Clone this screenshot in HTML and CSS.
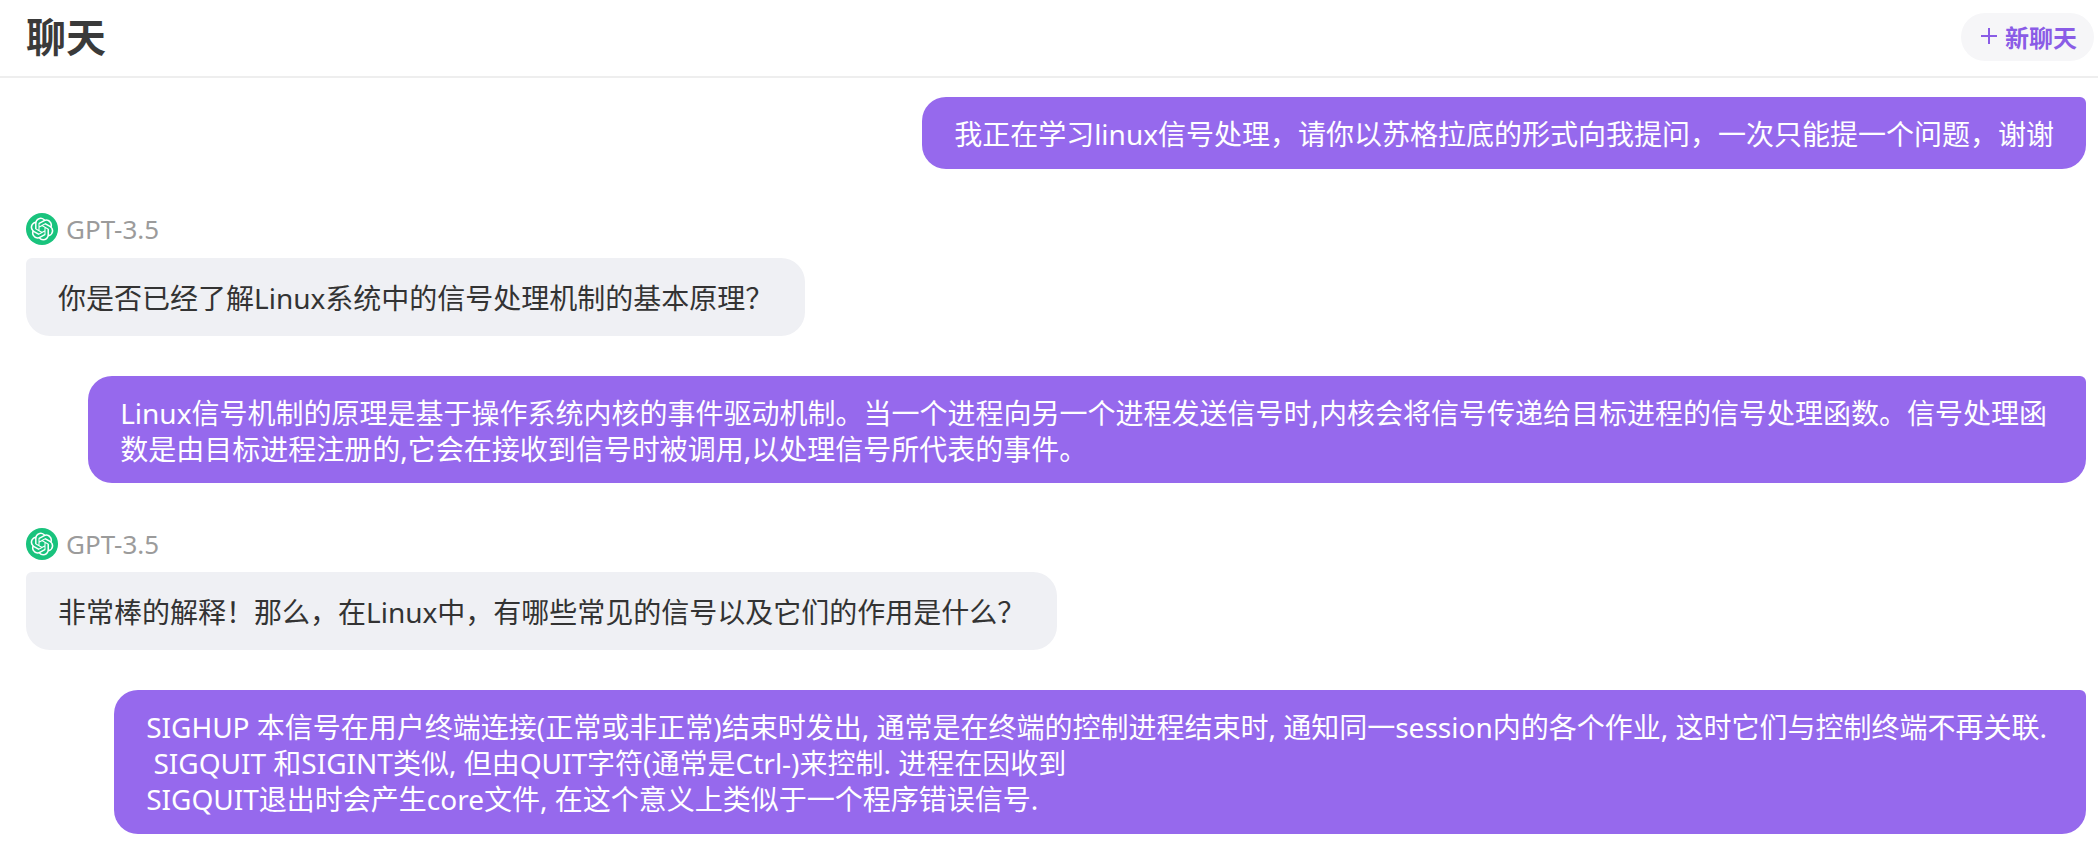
FILE: index.html
```html
<!DOCTYPE html>
<html lang="zh-CN">

<head>
    <meta charset="UTF-8">
    <meta name="viewport" content="width=device-width, initial-scale=1.0">
    <title>聊天</title>
    <link rel="stylesheet" href="styles.css">
</head>

<body>

    <header class="topbar">
        <h1 class="title">聊天</h1>
        <button class="new-chat">
            <svg class="plus" viewBox="0 0 18 18" width="18" height="18">
                <path d="M9 1v16M1 9h16" stroke="currentColor" stroke-width="2" fill="none" />
            </svg>
            <span>新聊天</span>
        </button>
    </header>

    <main class="chat">
        <div class="bubble user">我正在学习linux信号处理，请你以苏格拉底的形式向我提问，一次只能提一个问题，谢谢</div>

        <div class="reply">
            <div class="model">
                <svg class="avatar" viewBox="0 0 32 32" width="32" height="32">
                    <circle cx="16" cy="16" r="16" fill="#19c37d" />
                    <path transform="translate(4.6 4.6) scale(.95)" fill="#fff" d="M22.2819 9.8211a5.9847 5.9847 0 0 0-.5157-4.9108 6.0462 6.0462 0 0 0-6.5098-2.9A6.0651 6.0651 0 0 0 4.9807 4.1818a5.9847 5.9847 0 0 0-3.9977 2.9 6.0462 6.0462 0 0 0 .7427 7.0966 5.98 5.98 0 0 0 .511 4.9107 6.051 6.051 0 0 0 6.5146 2.9001A5.9847 5.9847 0 0 0 13.2599 24a6.0557 6.0557 0 0 0 5.7718-4.2058 5.9894 5.9894 0 0 0 3.9977-2.9001 6.0557 6.0557 0 0 0-.7475-7.0729zm-9.022 12.6081a4.4755 4.4755 0 0 1-2.8764-1.0408l.1419-.0804 4.7783-2.7582a.7948.7948 0 0 0 .3927-.6813v-6.7369l2.02 1.1686a.071.071 0 0 1 .038.052v5.5826a4.504 4.504 0 0 1-4.4945 4.4944zm-9.6607-4.1254a4.4708 4.4708 0 0 1-.5346-3.0137l.142.0852 4.783 2.7582a.7712.7712 0 0 0 .7806 0l5.8428-3.3685v2.3324a.0804.0804 0 0 1-.0332.0615L9.74 19.9502a4.4992 4.4992 0 0 1-6.1408-1.6464zM2.3408 7.8956a4.485 4.485 0 0 1 2.3655-1.9728V11.6a.7664.7664 0 0 0 .3879.6765l5.8144 3.3543-2.0201 1.1685a.0757.0757 0 0 1-.071 0l-4.8303-2.7865A4.504 4.504 0 0 1 2.3408 7.872zm16.5963 3.8558L13.1038 8.364 15.1192 7.2a.0757.0757 0 0 1 .071 0l4.8303 2.7913a4.4944 4.4944 0 0 1-.6765 8.1042v-5.6772a.79.79 0 0 0-.407-.667zm2.0107-3.0231l-.142-.0852-4.7735-2.7818a.7759.7759 0 0 0-.7854 0L9.409 9.2297V6.8974a.0662.0662 0 0 1 .0284-.0615l4.8303-2.7866a4.4992 4.4992 0 0 1 6.6802 4.66zM8.3065 12.863l-2.02-1.1638a.0804.0804 0 0 1-.038-.0567V6.0742a4.4992 4.4992 0 0 1 7.3757-3.4537l-.142.0805L8.704 5.459a.7948.7948 0 0 0-.3927.6813zm1.0976-2.3654l2.602-1.4998 2.6069 1.4998v2.9994l-2.5974 1.4997-2.6067-1.4997Z" />
                </svg>
                <span class="model-name">GPT-3.5</span>
            </div>
            <div class="bubble bot">你是否已经了解Linux系统中的信号处理机制的基本原理？</div>
        </div>

        <div class="bubble user long">Linux信号机制的原理是基于操作系统内核的事件驱动机制。当一个进程向另一个进程发送信号时,内核会将信号传递给目标进程的信号处理函数。信号处理函<br>数是由目标进程注册的,它会在接收到信号时被调用,以处理信号所代表的事件。</div>

        <div class="reply">
            <div class="model">
                <svg class="avatar" viewBox="0 0 32 32" width="32" height="32">
                    <circle cx="16" cy="16" r="16" fill="#19c37d" />
                    <path transform="translate(4.6 4.6) scale(.95)" fill="#fff" d="M22.2819 9.8211a5.9847 5.9847 0 0 0-.5157-4.9108 6.0462 6.0462 0 0 0-6.5098-2.9A6.0651 6.0651 0 0 0 4.9807 4.1818a5.9847 5.9847 0 0 0-3.9977 2.9 6.0462 6.0462 0 0 0 .7427 7.0966 5.98 5.98 0 0 0 .511 4.9107 6.051 6.051 0 0 0 6.5146 2.9001A5.9847 5.9847 0 0 0 13.2599 24a6.0557 6.0557 0 0 0 5.7718-4.2058 5.9894 5.9894 0 0 0 3.9977-2.9001 6.0557 6.0557 0 0 0-.7475-7.0729zm-9.022 12.6081a4.4755 4.4755 0 0 1-2.8764-1.0408l.1419-.0804 4.7783-2.7582a.7948.7948 0 0 0 .3927-.6813v-6.7369l2.02 1.1686a.071.071 0 0 1 .038.052v5.5826a4.504 4.504 0 0 1-4.4945 4.4944zm-9.6607-4.1254a4.4708 4.4708 0 0 1-.5346-3.0137l.142.0852 4.783 2.7582a.7712.7712 0 0 0 .7806 0l5.8428-3.3685v2.3324a.0804.0804 0 0 1-.0332.0615L9.74 19.9502a4.4992 4.4992 0 0 1-6.1408-1.6464zM2.3408 7.8956a4.485 4.485 0 0 1 2.3655-1.9728V11.6a.7664.7664 0 0 0 .3879.6765l5.8144 3.3543-2.0201 1.1685a.0757.0757 0 0 1-.071 0l-4.8303-2.7865A4.504 4.504 0 0 1 2.3408 7.872zm16.5963 3.8558L13.1038 8.364 15.1192 7.2a.0757.0757 0 0 1 .071 0l4.8303 2.7913a4.4944 4.4944 0 0 1-.6765 8.1042v-5.6772a.79.79 0 0 0-.407-.667zm2.0107-3.0231l-.142-.0852-4.7735-2.7818a.7759.7759 0 0 0-.7854 0L9.409 9.2297V6.8974a.0662.0662 0 0 1 .0284-.0615l4.8303-2.7866a4.4992 4.4992 0 0 1 6.6802 4.66zM8.3065 12.863l-2.02-1.1638a.0804.0804 0 0 1-.038-.0567V6.0742a4.4992 4.4992 0 0 1 7.3757-3.4537l-.142.0805L8.704 5.459a.7948.7948 0 0 0-.3927.6813zm1.0976-2.3654l2.602-1.4998 2.6069 1.4998v2.9994l-2.5974 1.4997-2.6067-1.4997Z" />
                </svg>
                <span class="model-name">GPT-3.5</span>
            </div>
            <div class="bubble bot">非常棒的解释！那么，在Linux中，有哪些常见的信号以及它们的作用是什么？</div>
        </div>

        <div class="bubble user long">SIGHUP 本信号在用户终端连接(正常或非正常)结束时发出, 通常是在终端的控制进程结束时, 通知同一session内的各个作业, 这时它们与控制终端不再关联.<br>&nbsp;SIGQUIT 和SIGINT类似, 但由QUIT字符(通常是Ctrl-)来控制. 进程在因收到<br>SIGQUIT退出时会产生core文件, 在这个意义上类似于一个程序错误信号.</div>
    </main>

</body>

</html>
```

FILE: styles.css
```css
* {
    margin: 0;
    padding: 0;
    box-sizing: border-box;
}

body {
    font-family: "Noto Sans", "Noto Sans CJK SC", sans-serif;
    background-color: #fff;
    color: #333;
    overflow: hidden;
}

.topbar {
    height: 78px;
    display: flex;
    justify-content: space-between;
    align-items: center;
    padding: 0 4px 2px 26px;
    border-bottom: 2px solid #eeeeee;
}

.title {
    font-size: 40px;
    line-height: 52px;
    font-weight: 700;
    color: #3a3a3a;
}

.new-chat {
    display: flex;
    align-items: center;
    gap: 7px;
    height: 48px;
    padding: 0 17px 2px 19px;
    border: none;
    border-radius: 24px;
    background-color: #f6f6f8;
    color: #8a5ce6;
    font-family: inherit;
    font-size: 24px;
    font-weight: 700;
}

.chat {
    display: flex;
    flex-direction: column;
    gap: 40px;
    padding: 19px 12px 0 26px;
}

.bubble {
    font-size: 28px;
    line-height: 36px;
    padding: 19px 32px 16.6px;
    white-space: nowrap;
}

.user {
    align-self: flex-end;
    background-color: #9669ed;
    color: #fff;
    border-radius: 24px 6px 24px 24px;
}

.long {
    padding-right: 39px;
}

.bot {
    align-self: flex-start;
    background-color: #eff0f4;
    color: #333;
    line-height: 42px;
    padding-bottom: 17px;
    border-radius: 6px 24px 24px 24px;
}

.reply {
    display: flex;
    flex-direction: column;
    gap: 12.5px;
    padding-top: 4.5px;
}

.model {
    display: flex;
    align-items: center;
    gap: 8px;
}

.avatar {
    flex-shrink: 0;
}

.model-name {
    font-size: 26px;
    line-height: 32px;
    color: #9b9b9b;
}
```
